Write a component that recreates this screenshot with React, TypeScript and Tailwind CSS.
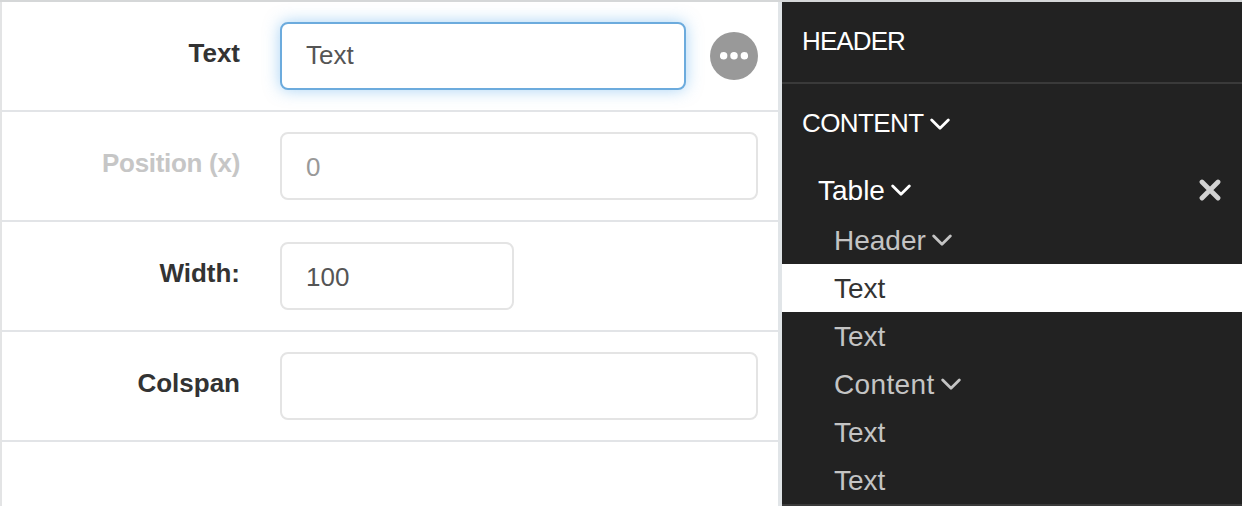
import type { ReactNode } from "react";

function Chevron() {
  return (
    <svg viewBox="0 0 20 12" className="h-3 w-5 shrink-0" fill="none" stroke="currentColor" strokeWidth="2.8" strokeLinecap="round" strokeLinejoin="round">
      <path d="M1.7 2L10 10.2L18.3 2" />
    </svg>
  );
}

function FormRow({ label, muted, children }: { label: string; muted?: boolean; children: ReactNode }) {
  return (
    <div className="flex h-[110px] items-start border-b-2 border-[#e2e4e7] pt-5 pr-5">
      <label className={`w-[238px] shrink-0 pt-4 text-right text-[26px] leading-[30px] font-bold ${muted ? "tracking-[-0.3px] text-[#c6c6c6]" : "text-[#333333]"}`}>
        {label}
      </label>
      <div className="ml-10 flex flex-1 items-center gap-6">{children}</div>
    </div>
  );
}

const field = "h-[68px] min-w-0 rounded-lg border-2 bg-white px-6 text-[26px] leading-[30px] outline-none";

function TreeItem({ label, selected, open, wide }: { label: string; selected?: boolean; open?: boolean; wide?: boolean }) {
  return (
    <div className={`flex h-12 items-center gap-1.5 pl-[52px] ${selected ? "bg-white text-[#333333]" : "text-[#c4c4c4]"}`}>
      <span className={`pt-0.5 ${wide ? "tracking-[0.35px]" : ""}`}>{label}</span>
      {open && <Chevron />}
    </div>
  );
}

export default function App() {
  return (
    <div className="flex h-[506px] w-[1242px] overflow-hidden border-t-2 border-[#d5d7d8] bg-white font-['Liberation_Sans',Arial,sans-serif]">
      <main className="w-[782px] shrink-0 border-r-4 border-l-2 border-r-[#e1e5e8] border-l-[#e3e4e5]">
        <FormRow label="Text">
          <input className={`${field} w-[406px] border-[#6cabdd] pb-0.5 text-[#555555] shadow-[0_0_16px_rgba(82,168,236,0.5)]`} defaultValue="Text" />
          <button aria-label="More options" className="flex size-12 shrink-0 items-center justify-center rounded-full bg-[#999999]">
            <svg viewBox="0 0 28 8" className="h-2 w-7" fill="white">
              <circle cx="3.6" cy="3.8" r="3.75" />
              <circle cx="14" cy="3.8" r="3.75" />
              <circle cx="24.4" cy="3.8" r="3.75" />
            </svg>
          </button>
        </FormRow>
        <FormRow label="Position (x)" muted>
          <input className={`${field} w-[478px] border-[#e4e4e4] pt-0.5 text-[#999999]`} defaultValue="0" />
        </FormRow>
        <FormRow label="Width:">
          <input className={`${field} w-[234px] border-[#e4e4e4] pt-0.5 text-[#555555]`} defaultValue="100" />
        </FormRow>
        <FormRow label="Colspan">
          <input aria-label="Colspan" className={`${field} w-[478px] border-[#e4e4e4] text-[#555555]`} />
        </FormRow>
      </main>
      <aside className="flex-1 border-b-2 border-[#3a3a3a] bg-[#222222] text-[28px] leading-8 text-white">
        <div className="flex h-[82px] items-center border-b-2 border-[#3a3a3a] pb-0.5 pl-5 text-[26px] tracking-[-0.9px]">HEADER</div>
        <div className="flex h-20 items-center gap-[7px] pl-5 text-[26px]">
          <span className="pb-0.5 tracking-[-0.6px]">CONTENT</span>
          <Chevron />
        </div>
        <div className="flex h-[52px] items-center pr-[21px] pl-9">
          <div className="flex flex-1 items-center gap-1.5">
            <span className="pt-0.5">Table</span>
            <Chevron />
          </div>
          <svg viewBox="0 0 22 22" className="size-[22px] text-[#d2d2d2]" fill="none" stroke="currentColor" strokeWidth="4.8" strokeLinecap="round">
            <path d="M3 3L19 19M19 3L3 19" />
          </svg>
        </div>
        <TreeItem label="Header" open />
        <TreeItem label="Text" selected />
        <TreeItem label="Text" />
        <TreeItem label="Content" open wide />
        <TreeItem label="Text" />
        <TreeItem label="Text" />
      </aside>
    </div>
  );
}
